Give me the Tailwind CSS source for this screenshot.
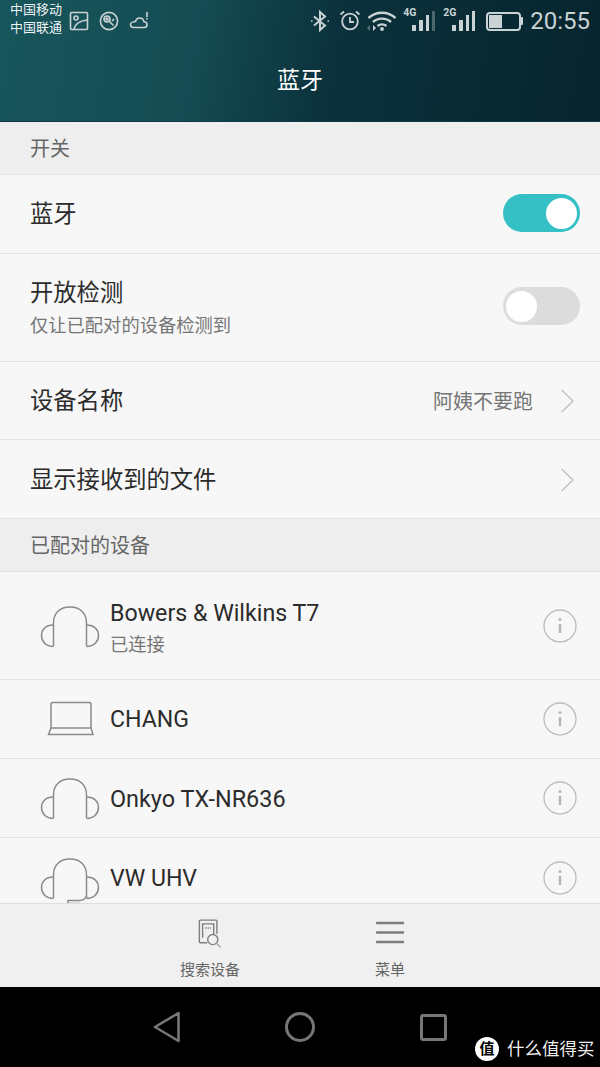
<!DOCTYPE html>
<html lang="zh-CN">
<head>
    <meta charset="UTF-8">
    <meta name="viewport" content="width=device-width, initial-scale=1.0">
    <title>蓝牙</title>
    <script src="https://cdn.jsdelivr.net/npm/@tailwindcss/browser@4"></script>
</head>
<body class="w-[600px] h-[1067px] overflow-hidden bg-[#f7f7f7] font-['Roboto','Noto_Sans_CJK_SC',sans-serif]">
    <div class="flex flex-col h-[1067px]">
        <!-- header -->
        <header class="h-[122px] shrink-0 bg-[linear-gradient(100deg,#18565c_0%,#154c53_32%,#0b323c_55%,#06242d_100%)] border-b border-[#0d3a42]">
            <div class="flex items-start h-[36px] pl-[10px] pr-[10px] text-[#c9d3d4]">
                <div class="w-[54px] text-[13px] leading-[18px] text-white/95 whitespace-nowrap mt-[1px] -mr-[1px]">
                    <div>中国移动</div>
                    <div>中国联通</div>
                </div>
                <svg class="ml-[6px] mt-[11px]" width="20" height="20" viewBox="0 0 20 20" fill="none" stroke="currentColor" stroke-width="1.600">
                    <rect x="1.500" y="1.500" width="17" height="17" rx="1"/>
                    <circle cx="7" cy="7" r="2"/>
                    <path d="M5 18c1-5 5-8 13-9"/>
                </svg>
                <svg class="ml-[10px] mt-[11px]" width="20" height="20" viewBox="0 0 20 20" fill="none" stroke="currentColor" stroke-width="1.600">
                    <circle cx="10" cy="10" r="8.600"/>
                    <circle cx="8" cy="8" r="3"/>
                    <circle cx="8" cy="8" r="1"/>
                    <path d="M10.500 10.500l4 4M13 10l2-2"/>
                </svg>
                <svg class="ml-[10px] mt-[10px]" width="20" height="20" viewBox="0 0 20 20" fill="none" stroke="currentColor" stroke-width="1.600">
                    <path d="M5 17.500h10c2 0 3-1.400 3-2.800 0-1.700-1.300-2.900-3-2.900-.5-2.400-2.200-3.800-4.200-3.800-2.200 0-3.800 1.500-4.300 3.500C4 11.500 1.500 12.700 1.500 14.700c0 1.600 1.500 2.800 3.500 2.800z"/>
                    <path d="M18 2v5M18 8v1.500"/>
                </svg>
                <div class="flex-1"></div>
                <svg class="mt-[10px]" width="20" height="22" viewBox="0 0 20 22" fill="none" stroke="currentColor" stroke-width="2">
                    <path d="M4 6.500l11 9-5 4.500V2l5 4.500-11 9"/>
                    <path d="M1 11h1.500M17.500 11H19" stroke-width="1.600"/>
                </svg>
                <svg class="ml-[9px] mt-[9px]" width="22" height="22" viewBox="0 0 22 22" fill="none" stroke="currentColor" stroke-width="1.800">
                    <circle cx="11" cy="12.500" r="7.800"/>
                    <path d="M11 8v5h4M1.500 5.500L5 2.500M20.500 5.500L17 2.500"/>
                </svg>
                <svg class="ml-[6px] mt-[9px]" width="30" height="23" viewBox="0 0 30 23" fill="none" stroke="currentColor" stroke-width="2.400">
                    <path d="M1.500 9C9 2 21 2 28.500 9M6 13c5-4.500 13-4.500 18 0M10.500 17c2.600-2 6.400-2 9 0"/>
                    <circle cx="15" cy="20" r="1.900" fill="currentColor" stroke="none"/>
                    <path d="M0 19l3-3v6z" fill="currentColor" stroke="none" opacity=".4"/>
                    <path d="M6 16l3 3-3 3z" fill="currentColor" stroke="none"/>
                </svg>
                <div class="relative ml-[6px] w-[32px] h-[24px] mt-[7px]">
                    <span class="absolute left-0 top-0 text-[10.500px] leading-[12px] font-bold">4G</span>
                    <div class="absolute right-0 bottom-[0px] flex items-end gap-[3px]">
                        <i class="block w-[4px] h-[6px] bg-[#c9d3d4]"></i>
                        <i class="block w-[4px] h-[11px] bg-[#c9d3d4]"></i>
                        <i class="block w-[3px] h-[16px] bg-[#c9d3d4]"></i>
                        <i class="block w-[3px] h-[20px] bg-[#c9d3d4]/35"></i>
                    </div>
                </div>
                <div class="relative ml-[8px] w-[32px] h-[24px] mt-[7px]">
                    <span class="absolute left-0 top-0 text-[10.500px] leading-[12px] font-bold">2G</span>
                    <div class="absolute right-0 bottom-[0px] flex items-end gap-[3px]">
                        <i class="block w-[4px] h-[6px] bg-[#c9d3d4]"></i>
                        <i class="block w-[4px] h-[11px] bg-[#c9d3d4]"></i>
                        <i class="block w-[3px] h-[16px] bg-[#c9d3d4]"></i>
                        <i class="block w-[3px] h-[20px] bg-[#c9d3d4]"></i>
                    </div>
                </div>
                <div class="ml-[11px] mt-[12px] w-[35px] h-[19px] border-2 border-[#c9d3d4] rounded-[4px] p-[1px]">
                    <div class="w-[13px] h-full bg-[#c9d3d4]"></div>
                </div>
                <div class="w-[2px] h-[8px] bg-[#c9d3d4] mt-[17px] rounded-r-[1px]"></div>
                <span class="ml-[7px] mt-[7px] text-[24px] leading-[28px]">20:55</span>
            </div>
            <div class="mt-[30px] text-center text-[23px] leading-[30px] text-white">蓝牙</div>
        </header>

        <!-- settings list -->
        <div class="h-[53px] shrink-0 bg-[#eeeeee] border-b border-[#e3e3e3] pl-[30px] pt-[2px] flex items-center text-[20px] text-[#666666]">开关</div>

        <div class="h-[79px] shrink-0 pl-[30px] pr-[20px] border-b border-[#e4e4e4] flex items-center justify-between">
            <span class="text-[23.300px] text-[#2b2b2b]">蓝牙</span>
            <div class="-mt-[2px] w-[77px] h-[38px] rounded-full bg-[#35c0c5] p-[3px] flex justify-end">
                <div class="w-[31px] h-[31px] mt-[0.5px] rounded-full bg-white"></div>
            </div>
        </div>

        <div class="h-[108px] shrink-0 pl-[30px] pr-[20px] border-b border-[#e4e4e4] flex items-center justify-between">
            <div>
                <div class="text-[23.300px] leading-[34px] text-[#2b2b2b]">开放检测</div>
                <div class="text-[18.300px] leading-[26px] text-[#757575] mt-[3px]">仅让已配对的设备检测到</div>
            </div>
            <div class="-mt-[3px] w-[77px] h-[38px] rounded-full bg-[#dcdcdc] p-[3px] flex">
                <div class="w-[31px] h-[31px] mt-[0.5px] rounded-full bg-white"></div>
            </div>
        </div>

        <div class="h-[78px] shrink-0 pl-[30px] pr-[26px] border-b border-[#e4e4e4] flex items-center">
            <span class="mt-[2px] text-[23.300px] text-[#2b2b2b]">设备名称</span>
            <span class="mt-[2px] ml-auto text-[20px] text-[#757575]">阿姨不要跑</span>
            <svg class="ml-[28px]" width="13" height="24" viewBox="0 0 13 24" fill="none" stroke="#bdbdbd" stroke-width="1.300"><path d="M.7 1L12 12 .7 23"/></svg>
        </div>

        <div class="h-[79px] shrink-0 pl-[30px] pr-[26px] border-b border-[#e4e4e4] flex items-center justify-between">
            <span class="mt-[2px] text-[23.300px] text-[#2b2b2b]">显示接收到的文件</span>
            <svg class="mt-[2px]" width="13" height="24" viewBox="0 0 13 24" fill="none" stroke="#bdbdbd" stroke-width="1.300"><path d="M.7 1L12 12 .7 23"/></svg>
        </div>

        <div class="h-[53px] shrink-0 bg-[#eeeeee] border-b border-[#e3e3e3] pl-[30px] pt-[2px] flex items-center text-[20px] text-[#666666]">已配对的设备</div>

        <!-- paired devices -->
        <div class="flex-1 min-h-0 overflow-hidden">
            <div class="h-[108px] pl-[40px] pr-[23px] border-b border-[#e4e4e4] flex items-center">
                <svg class="w-[60px] h-[42px] mt-[2px] shrink-0" viewBox="0 0 60 42" fill="none" stroke="#8a8a8a" stroke-width="1.500">
                    <path d="M13.500 40V17C13.500 7 20 1 30 1s16.500 6 16.500 16v23"/>
                    <path d="M13 19C6 19 1.500 23.500 1.500 29.500S6 40.500 13.500 40.500M47 19c7 0 11.500 4.500 11.500 10.500S54 40.500 46.500 40.500"/>
                </svg>
                <div class="ml-[10px] mt-[3px]">
                    <div class="text-[23.200px] leading-[32px] text-[#2b2b2b]">Bowers &amp; Wilkins T7</div>
                    <div class="text-[18.300px] leading-[26px] text-[#757575] mt-[3px]">已连接</div>
                </div>
                <svg class="ml-auto" width="34" height="34" viewBox="0 0 34 34" fill="none" stroke="#bdbdbd" stroke-width="1.300"><circle cx="17" cy="17" r="16"/><circle cx="17" cy="10.500" r="1.500" fill="#b5b5b5" stroke="none"/><path d="M17 15v9" stroke-width="2.400" stroke="#b5b5b5"/></svg>
            </div>
            <div class="h-[79px] pl-[40px] pr-[23px] border-b border-[#e4e4e4] flex items-center">
                <svg class="w-[60px] h-[36px] -mt-[1px] shrink-0" viewBox="0 0 60 36" fill="none" stroke="#8a8a8a" stroke-width="1.500">
                    <path d="M11 27V3.500c0-1.200.8-2 2-2h36c1.200 0 2 .8 2 2V27"/>
                    <path d="M11 27h40l2 6.500H8.500z"/>
                </svg>
                <span class="mt-[3px] ml-[10px] text-[23.100px] text-[#2b2b2b]">CHANG</span>
                <svg class="ml-auto" width="34" height="34" viewBox="0 0 34 34" fill="none" stroke="#bdbdbd" stroke-width="1.300"><circle cx="17" cy="17" r="16"/><circle cx="17" cy="10.500" r="1.500" fill="#b5b5b5" stroke="none"/><path d="M17 15v9" stroke-width="2.400" stroke="#b5b5b5"/></svg>
            </div>
            <div class="h-[79px] pl-[40px] pr-[23px] border-b border-[#e4e4e4] flex items-center">
                <svg class="w-[60px] h-[42px] mt-[1px] shrink-0" viewBox="0 0 60 42" fill="none" stroke="#8a8a8a" stroke-width="1.500">
                    <path d="M13.500 40V17C13.500 7 20 1 30 1s16.500 6 16.500 16v23"/>
                    <path d="M13 19C6 19 1.500 23.500 1.500 29.500S6 40.500 13.500 40.500M47 19c7 0 11.500 4.500 11.500 10.500S54 40.500 46.500 40.500"/>
                </svg>
                <span class="mt-[4px] ml-[10px] text-[23.400px] text-[#2b2b2b]">Onkyo TX-NR636</span>
                <svg class="ml-auto" width="34" height="34" viewBox="0 0 34 34" fill="none" stroke="#bdbdbd" stroke-width="1.300"><circle cx="17" cy="17" r="16"/><circle cx="17" cy="10.500" r="1.500" fill="#b5b5b5" stroke="none"/><path d="M17 15v9" stroke-width="2.400" stroke="#b5b5b5"/></svg>
            </div>
            <div class="h-[79px] pl-[40px] pr-[23px] flex items-center">
                <svg class="w-[60px] h-[50px] mt-[10px] shrink-0" viewBox="0 0 60 50" fill="none" stroke="#8a8a8a" stroke-width="1.500">
                    <path d="M13.500 40V17C13.500 7 20 1 30 1s16.500 6 16.500 16v23"/>
                    <path d="M13 19C6 19 1.500 23.500 1.500 29.500S6 40.500 13.500 40.500M47 19c7 0 11.500 4.500 11.500 10.500S54 40.500 46.500 40.500"/>
                    <path d="M46.500 38c-1 2-3 4.500-6 4.500H28v3h12"/>
                </svg>
                <span class="mt-[4px] ml-[10px] text-[23.100px] text-[#2b2b2b]">VW UHV</span>
                <svg class="ml-auto" width="34" height="34" viewBox="0 0 34 34" fill="none" stroke="#bdbdbd" stroke-width="1.300"><circle cx="17" cy="17" r="16"/><circle cx="17" cy="10.500" r="1.500" fill="#b5b5b5" stroke="none"/><path d="M17 15v9" stroke-width="2.400" stroke="#b5b5b5"/></svg>
            </div>
        </div>

        <!-- bottom actions -->
        <div class="h-[84px] shrink-0 bg-[#f0f0f0] border-t border-[#dedede]">
            <div class="flex h-full">
                <div class="w-[180px] ml-[120px] flex flex-col items-center pt-[15px]">
                    <svg width="24" height="30" viewBox="0 0 26 32" fill="none" stroke="#7d7d7d" stroke-width="1.500">
                        <path d="M10 25.500H2.500c-.7 0-1-.3-1-1V2c0-.7.3-1 1-1h17c.7 0 1 .3 1 1v14"/>
                        <path d="M5 20V5h12v11"/>
                        <path d="M8 9.500h6" stroke-dasharray="1.500 1"/>
                        <circle cx="16" cy="22" r="5.500"/>
                        <path d="M20 26l4.500 4.500" stroke="#a0a0a0"/>
                    </svg>
                    <span class="mt-[11px] text-[15px] leading-[20px] text-[#666666]">搜索设备</span>
                </div>
                <div class="w-[180px] flex flex-col items-center pt-[17px]">
                    <svg width="30" height="26" viewBox="0 0 30 26" fill="none" stroke="#7d7d7d" stroke-width="2.400" stroke-linecap="round"><path d="M2 2h26M2 11.500h26M2 21h26"/></svg>
                    <span class="mt-[13px] text-[15px] leading-[20px] text-[#666666]">菜单</span>
                </div>
            </div>
        </div>

        <!-- nav bar -->
        <div class="h-[80px] shrink-0 bg-black relative flex items-center">
            <svg class="ml-[153px] -mt-[1px]" width="28" height="32" viewBox="0 0 28 32" fill="none" stroke="#777777" stroke-width="2.600" stroke-linejoin="round"><path d="M25.500 2L2 16l23.500 14z"/></svg>
            <div class="ml-[104px] w-[30px] h-[30px] rounded-full border-[3px] border-[#777777]"></div>
            <div class="ml-[105px] w-[27px] h-[27px] rounded-[3px] border-[3px] border-[#777777]"></div>
            <div class="absolute left-[475px] top-[50px] flex items-center gap-[8px]">
                <div class="w-[24px] h-[24px] rounded-full bg-white text-black text-[15px] leading-[24px] text-center font-bold">值</div>
                <span class="text-[17.500px] leading-[24px] text-white/95 whitespace-nowrap">什么值得买</span>
            </div>
        </div>
    </div>
</body>
</html>
